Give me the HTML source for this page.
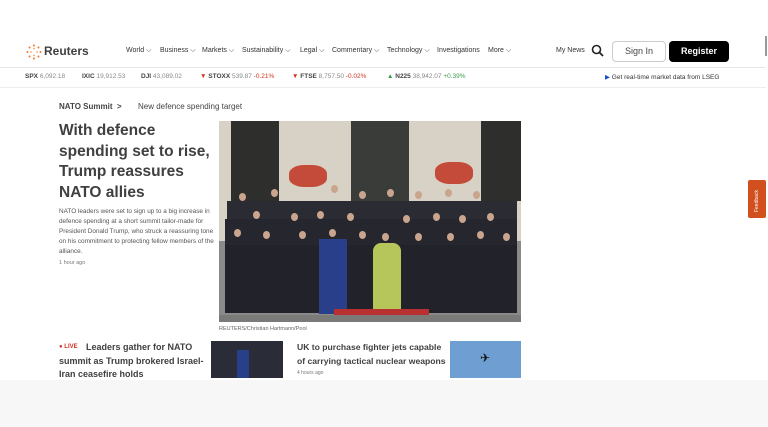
<!DOCTYPE html>
<html><head><meta charset="utf-8"><style>
*{margin:0;padding:0;box-sizing:border-box}
body{width:768px;height:427px;overflow:hidden;background:#fff;font-family:"Liberation Sans",sans-serif;color:#404040;position:relative}
.a{position:absolute;white-space:nowrap}
.nav{font-size:7px;color:#333;top:47px}
.tk{font-size:6.5px;top:73px;color:#888}
.tk b{color:#444}
.r{color:#d0351f}.g{color:#3a9a4a}
.p{position:absolute}
.h{position:absolute;width:7px;height:8px;border-radius:50%;background:#c9a58e}
</style></head><body>
<div class="p" style="left:0;top:380px;width:768px;height:47px;background:#f7f7f7"></div>
<div class="p" style="left:0;top:67px;width:766px;height:1px;background:#e6e6e6"></div>
<div class="p" style="left:0;top:87px;width:766px;height:1px;background:#ececec"></div>
<div class="p" style="left:765px;top:36px;width:2px;height:20px;background:#999"></div>
<svg class="p" style="left:26px;top:44px" width="16" height="16" viewBox="0 0 16 16"><g fill="#f07a2a"><circle cx="8" cy="1.5" r="1"/><circle cx="12.5" cy="3.5" r="1"/><circle cx="14.5" cy="8" r="1"/><circle cx="12.5" cy="12.5" r="1"/><circle cx="8" cy="14.5" r="1"/><circle cx="3.5" cy="12.5" r="1"/><circle cx="1.5" cy="8" r="1"/><circle cx="3.5" cy="3.5" r="1"/><circle cx="8" cy="4.5" r=".7"/><circle cx="11" cy="8" r=".7"/><circle cx="8" cy="11.5" r=".7"/><circle cx="5" cy="8" r=".7"/></g></svg>
<div class="a" style="left:44px;top:44px;font-size:12px;font-weight:bold;color:#404040">Reuters</div>
<div class="a nav" style="left:126px">World ⌵</div>
<div class="a nav" style="left:160px">Business ⌵</div>
<div class="a nav" style="left:202px">Markets ⌵</div>
<div class="a nav" style="left:242px">Sustainability ⌵</div>
<div class="a nav" style="left:300px">Legal ⌵</div>
<div class="a nav" style="left:332px">Commentary ⌵</div>
<div class="a nav" style="left:387px">Technology ⌵</div>
<div class="a nav" style="left:437px">Investigations</div>
<div class="a nav" style="left:488px">More ⌵</div>
<div class="a nav" style="left:556px">My News</div>
<svg class="p" style="left:591px;top:44px" width="13" height="13" viewBox="0 0 13 13"><circle cx="5.5" cy="5.5" r="4" fill="none" stroke="#222" stroke-width="1.6"/><path d="M8.5 8.5L12 12" stroke="#222" stroke-width="1.8"/></svg>
<div class="a" style="left:612px;top:41px;width:54px;height:21px;border:1px solid #ccc;border-radius:4px;font-size:9px;color:#444;text-align:center;line-height:19px">Sign In</div>
<div class="a" style="left:669px;top:41px;width:60px;height:21px;background:#000;border-radius:4px;font-size:9px;font-weight:bold;color:#fff;text-align:center;line-height:21px">Register</div>
<div class="a tk" style="left:25px"><b>SPX</b> 6,092.18</div>
<div class="a tk" style="left:82px"><b>IXIC</b> 19,912.53</div>
<div class="a tk" style="left:141px"><b>DJI</b> 43,089.02</div>
<div class="a tk" style="left:200px"><span class="r">▼</span> <b>STOXX</b> 539.87 <span class="r">-0.21%</span></div>
<div class="a tk" style="left:292px"><span class="r">▼</span> <b>FTSE</b> 8,757.50 <span class="r">-0.02%</span></div>
<div class="a tk" style="left:387px"><span class="g">▲</span> <b>N225</b> 38,942.07 <span class="g">+0.39%</span></div>
<div class="a tk" style="left:605px;color:#333"><span style="color:#1a4fd0">▶</span> Get real-time market data from LSEG</div>
<div class="a" style="left:59px;top:102px;font-size:8px;font-weight:bold;color:#444">NATO Summit &nbsp;&gt;</div>
<div class="a" style="left:138px;top:102px;font-size:8px;color:#444">New defence spending target</div>
<div class="a" style="left:59px;top:121px;font-size:15.5px;font-weight:bold;color:#404040;line-height:20.5px;white-space:normal;width:160px">With defence spending set to rise, Trump reassures NATO allies</div>
<div class="a" style="left:59px;top:207px;font-size:6.4px;color:#555;line-height:10px;white-space:normal;width:160px">NATO leaders were set to sign up to a big increase in defence spending at a short summit tailor-made for President Donald Trump, who struck a reassuring tone on his commitment to protecting fellow members of the alliance.</div>
<div class="a" style="left:59px;top:260px;font-size:5.5px;color:#777">1 hour ago</div>
<div class="p" style="left:219px;top:121px;width:302px;height:201px;background:#d8d2c6;overflow:hidden">
<div class="p" style="left:12px;top:0;width:48px;height:80px;background:#2e2e2c"></div>
<div class="p" style="left:132px;top:0;width:58px;height:80px;background:#3a3c3a"></div>
<div class="p" style="left:262px;top:0;width:40px;height:80px;background:#2e2e2c"></div>
<div class="p" style="left:70px;top:44px;width:38px;height:22px;background:#c44a3a;border-radius:40%"></div>
<div class="p" style="left:216px;top:41px;width:38px;height:22px;background:#c44a3a;border-radius:40%"></div>
<div class="p" style="left:0;top:120px;width:302px;height:81px;background:#8a8a8a"></div>
<div class="p" style="left:8px;top:80px;width:290px;height:20px;background:#2a2b33"></div>
<div class="p" style="left:6px;top:98px;width:292px;height:40px;background:#26272e"></div>
<div class="p" style="left:6px;top:124px;width:292px;height:68px;background:#22232a"></div>
<div class="p" style="left:100px;top:118px;width:28px;height:75px;background:#2a3f8a"></div>
<div class="p" style="left:154px;top:122px;width:28px;height:74px;background:#b7c65a;border-radius:8px 8px 2px 2px"></div>
<div class="p" style="left:115px;top:188px;width:95px;height:10px;background:#b83030"></div>
<div class="p" style="left:0;top:194px;width:302px;height:7px;background:#7a7a78"></div>
<div class="h" style="left:20px;top:72px"></div><div class="h" style="left:52px;top:68px"></div><div class="h" style="left:112px;top:64px"></div><div class="h" style="left:140px;top:70px"></div><div class="h" style="left:168px;top:68px"></div><div class="h" style="left:196px;top:70px"></div><div class="h" style="left:226px;top:68px"></div><div class="h" style="left:254px;top:70px"></div>
<div class="h" style="left:34px;top:90px"></div><div class="h" style="left:72px;top:92px"></div><div class="h" style="left:98px;top:90px"></div><div class="h" style="left:128px;top:92px"></div><div class="h" style="left:184px;top:94px"></div><div class="h" style="left:214px;top:92px"></div><div class="h" style="left:240px;top:94px"></div><div class="h" style="left:268px;top:92px"></div>
<div class="h" style="left:15px;top:108px"></div><div class="h" style="left:44px;top:110px"></div><div class="h" style="left:80px;top:110px"></div><div class="h" style="left:110px;top:108px"></div><div class="h" style="left:140px;top:110px"></div><div class="h" style="left:163px;top:112px"></div><div class="h" style="left:196px;top:112px"></div><div class="h" style="left:228px;top:112px"></div><div class="h" style="left:258px;top:110px"></div><div class="h" style="left:284px;top:112px"></div>
</div>
<div class="a" style="left:219px;top:326px;font-size:5.5px;color:#666">REUTERS/Christian Hartmann/Pool</div>
<div class="a" style="left:59px;top:344px;font-size:6px;font-weight:bold;color:#d0351f">● LIVE</div>
<div class="a" style="left:59px;top:341px;font-size:9px;font-weight:bold;color:#404040;line-height:13.5px;white-space:normal;width:150px;text-indent:27px">Leaders gather for NATO summit as Trump brokered Israel-Iran ceasefire holds</div>
<div class="p" style="left:211px;top:341px;width:72px;height:37px;background:#2a2c38"></div>
<div class="p" style="left:237px;top:350px;width:12px;height:28px;background:#2a3f8a"></div>
<div class="a" style="left:297px;top:341px;font-size:8.6px;font-weight:bold;color:#404040;line-height:13.5px;white-space:normal;width:152px">UK to purchase fighter jets capable of carrying tactical nuclear weapons</div>
<div class="a" style="left:297px;top:370px;font-size:5px;color:#777">4 hours ago</div>
<div class="p" style="left:450px;top:341px;width:71px;height:37px;background:#6f9fd2"></div>
<div class="a" style="left:480px;top:351px;font-size:12px;color:#111">✈</div>
<div class="a" style="left:748px;top:180px;width:18px;height:38px;background:#d2501e;border-radius:2px"></div>
<div class="a" style="left:754px;top:212px;font-size:5px;color:#fff;transform:rotate(-90deg);transform-origin:0 0">Feedback</div>
</body></html>
